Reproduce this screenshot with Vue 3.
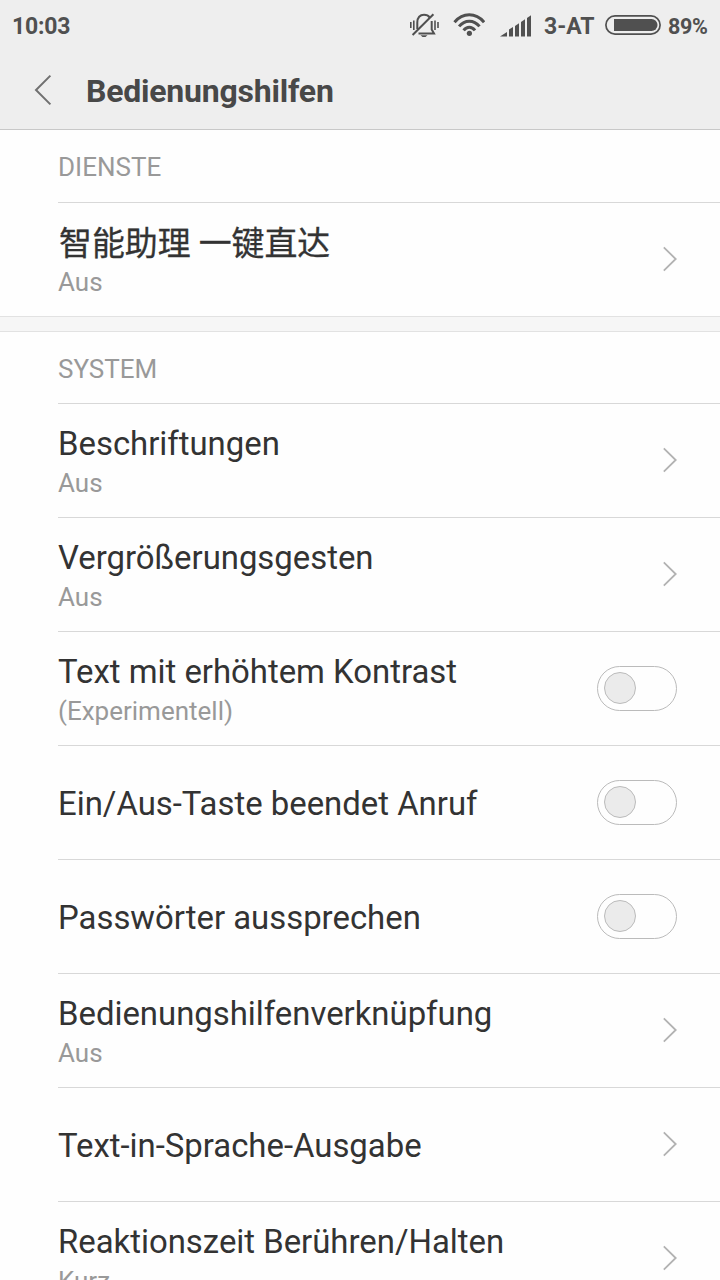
<template>
    <div class="page">
        <header class="header">
            <div class="status-bar">
                <span class="time">10:03</span>
                <div class="status-icons">
                    <svg class="icon-mute" width="30" height="26" viewBox="0 0 30 26" fill="none" stroke="#505050">
                        <path d="M1.8 9V15M4.8 7.5V17M26 7.5V17M29 9V15" stroke-width="1.6"/>
                        <path d="M8.3 16V9.5C8.3 4.5 11 1.8 15 1.8C17.6 1.8 19.6 2.8 20.8 4.6M22.7 8V16.5L25 20.4H9.5" stroke-width="2"/>
                        <path d="M3.6 22L24.4 1.2" stroke-width="2"/>
                        <path d="M11.5 22.3H18.5L16.5 24H13.5Z" fill="#505050" stroke="none"/>
                    </svg>
                    <svg class="icon-wifi" width="32" height="24" viewBox="0 0 32 24" fill="none" stroke="#505050" stroke-width="3">
                        <path d="M1.5 9.2C9.8 -0.7 22.8 -0.7 31.1 9.2"/>
                        <path d="M6.1 13.4C11.8 6.4 20.8 6.4 26.5 13.4"/>
                        <path d="M10.6 17.4C13.9 13.2 18.7 13.2 22 17.4"/>
                        <circle cx="16.4" cy="20.3" r="2.6" fill="#505050" stroke="none"/>
                    </svg>
                    <svg class="icon-signal" width="32" height="22" viewBox="0 0 32 22" fill="#505050">
                        <path d="M0 21.5L7 17V21.5Z"/>
                        <path d="M9 21.5V14.5L13 12V21.5Z"/>
                        <path d="M15 21.5V11L19 8.2V21.5Z"/>
                        <path d="M21 21.5V7L25 4.3V21.5Z"/>
                        <path d="M27 21.5V3L31 0.3V21.5Z"/>
                    </svg>
                    <span class="carrier">3-AT</span>
                    <svg class="icon-battery" width="56" height="20" viewBox="0 0 56 20">
                        <rect x="0.9" y="0.9" width="54.2" height="18.2" rx="9.1" fill="none" stroke="#505050" stroke-width="1.7"/>
                        <path d="M9 4H46.5A6 6 0 0 1 46.5 16H9Z" fill="#505050"/>
                    </svg>
                    <span class="percent">89%</span>
                </div>
            </div>
            <div class="title-bar">
                <svg class="back" width="18" height="32" viewBox="0 0 18 32" fill="none" stroke="#707070" stroke-width="2">
                    <path d="M16.4 1.6L2 16L16.4 30.4"/>
                </svg>
                <h1>Bedienungshilfen</h1>
            </div>
        </header>

        <section v-for="group in groups" :key="group.name" class="group">
            <h2 class="group-name">{{ group.name }}</h2>
            <div v-for="item in group.items" :key="item.title" class="row" @click="toggle(item)">
                <div class="row-text">
                    <div :class="['row-title', { chinese: item.chinese }]">{{ item.title }}</div>
                    <div v-if="item.summary" class="row-summary">{{ item.summary }}</div>
                </div>
                <div v-if="item.type === 'switch'" :class="['switch', { on: item.value }]">
                    <div class="knob"></div>
                </div>
                <svg v-else class="arrow" width="15" height="26" viewBox="0 0 15 26" fill="none" stroke="#b2b2b2" stroke-width="1.8">
                    <path d="M1.8 1.4L13.7 13L1.8 24.6"/>
                </svg>
            </div>
        </section>
    </div>
</template>

<script setup>
    import { ref } from 'vue';
    
    const groups = ref([
        {
            name: 'DIENSTE',
            items: [
                {title: '智能助理 一键直达', summary: 'Aus', type: 'link', chinese: true}
            ]
        },
        {
            name: 'SYSTEM',
            items: [
                {title: 'Beschriftungen', summary: 'Aus', type: 'link'},
                {title: 'Vergrößerungsgesten', summary: 'Aus', type: 'link'},
                {title: 'Text mit erhöhtem Kontrast', summary: '(Experimentell)', type: 'switch', value: false},
                {title: 'Ein/Aus-Taste beendet Anruf', type: 'switch', value: false},
                {title: 'Passwörter aussprechen', type: 'switch', value: false},
                {title: 'Bedienungshilfenverknüpfung', summary: 'Aus', type: 'link'},
                {title: 'Text-in-Sprache-Ausgabe', type: 'link'},
                {title: 'Reaktionszeit Berühren/Halten', summary: 'Kurz', type: 'link'}
            ]
        }
    ]);
    
    const toggle = (item) => {
        if (item.type === 'switch') {
            item.value = !item.value;
        }
    };
</script>

<style>
    body {
        margin: 0;
        overflow: hidden;
    }
</style>

<style scoped>
    .page {
        height: 1280px;
        overflow: hidden;
        background-color: #fefefe;
        color: #333;
        font-family: Roboto, "Noto Sans CJK SC", sans-serif;
    }
    
    .header {
        box-sizing: border-box;
        height: 130px;
        background-color: #eee;
        border-bottom: 1px solid #c8c8c8;
    }
    
    .status-bar {
        display: flex;
        justify-content: space-between;
        align-items: center;
        height: 52px;
        padding: 0 13px 0 12px;
        color: #505050;
        font-size: 23px;
        font-weight: 700;
        line-height: 52px;
        white-space: nowrap;
    }
    
    .time {
        padding-top: 2px;
        letter-spacing: -0.2px;
    }
    
    .status-icons {
        display: flex;
        align-items: center;
    }
    
    .icon-mute {
        margin-bottom: 1px;
    }
    
    .icon-wifi {
        margin-left: 14px;
        margin-bottom: 2px;
    }
    
    .icon-signal {
        margin-left: 15px;
    }
    
    .carrier {
        width: 50px;
        margin-left: 12px;
        padding-top: 2px;
    }
    
    .icon-battery {
        margin-left: 11px;
        margin-bottom: 2px;
    }
    
    .percent {
        width: 39px;
        margin-left: 7px;
        padding-top: 1px;
        font-size: 21.5px;
        letter-spacing: -0.3px;
    }
    
    .title-bar {
        display: flex;
        align-items: center;
        height: 77px;
        padding-left: 34px;
    }
    
    .back {
        margin-bottom: 2px;
    }
    
    .title-bar h1 {
        margin: 1px 0 0 34px;
        color: #484848;
        font-size: 32px;
        font-weight: 700;
        letter-spacing: -0.22px;
        line-height: 40px;
    }
    
    .group-name {
        height: 72px;
        margin: 0;
        padding-left: 58px;
        color: #999;
        font-size: 26px;
        font-weight: 400;
        line-height: 74px;
    }
    
    /* 分组之间的灰色间隔 */
    .group + .group::before {
        content: "";
        display: block;
        height: 14px;
        border: solid #e2e2e2;
        border-width: 1px 0;
        background-color: #f6f6f6;
    }
    
    .group + .group .group-name {
        height: 71px;
    }
    
    .row {
        box-sizing: border-box;
        display: flex;
        justify-content: space-between;
        align-items: center;
        height: 114px;
        margin-left: 58px;
        padding-right: 43px;
        border-top: 1px solid #d8d8d8;
    }
    
    .row-text {
        padding-top: 2px;
    }
    
    .row-title {
        font-size: 32.9px;
        line-height: 42px;
        letter-spacing: -0.01px;
    }
    
    .row-title.chinese {
        box-sizing: border-box;
        height: 42px;
        padding: 1px 0 0 1px;
        -webkit-text-stroke: 0.3px #333;
    }
    
    .row-summary {
        color: #999;
        font-size: 26px;
        line-height: 36px;
    }
    
    .arrow {
        margin-bottom: 2px;
    }
    
    .switch {
        box-sizing: border-box;
        width: 80px;
        height: 45px;
        padding: 5px 6px;
        border: 1px solid #bbb;
        border-radius: 23px;
    }
    
    .knob {
        box-sizing: border-box;
        width: 32px;
        height: 32px;
        border: 1px solid #bbb;
        border-radius: 50%;
        background-color: #ebebeb;
    }
    
    .switch.on .knob {
        margin-left: auto;
    }
</style>
